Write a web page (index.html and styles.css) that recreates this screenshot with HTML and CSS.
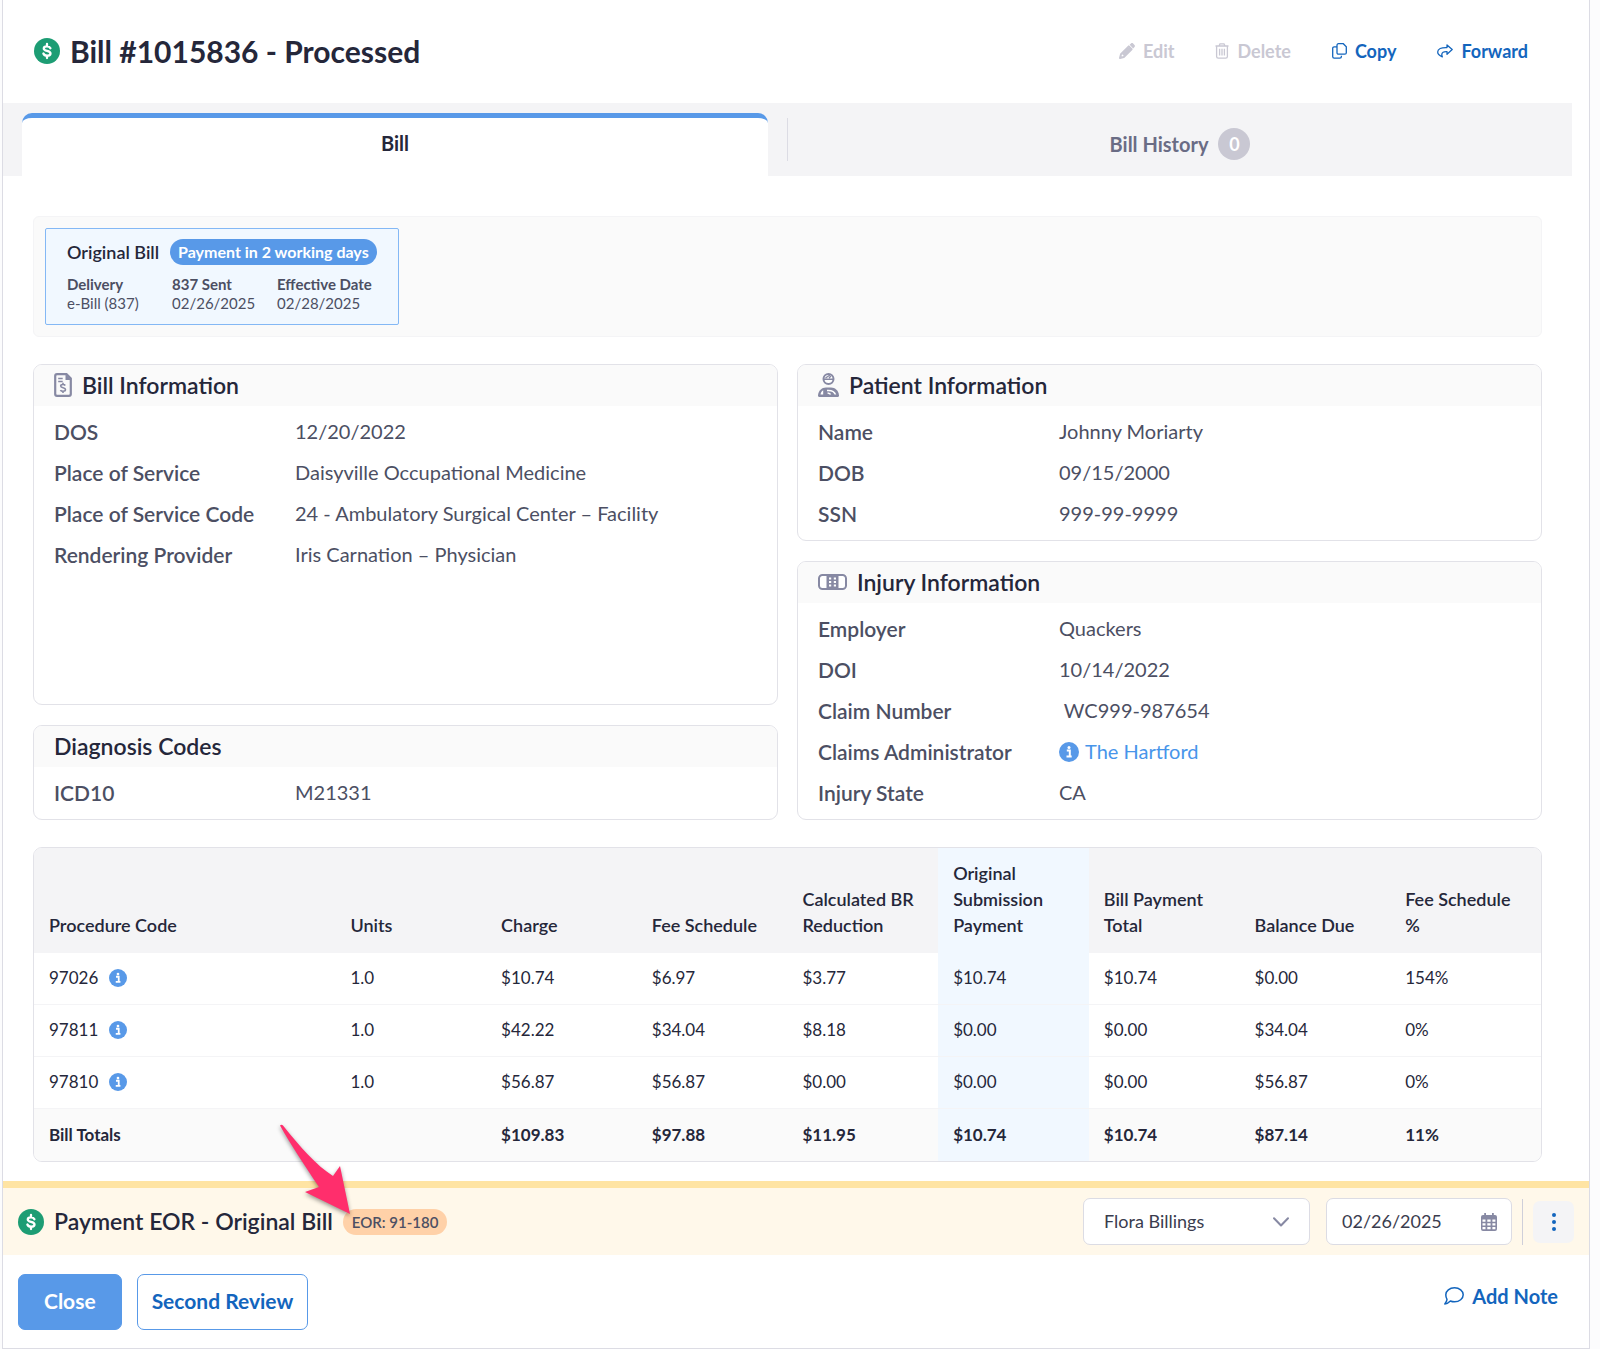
FILE: index.html
```html
<!DOCTYPE html>
<html lang="en">

<head>
    <meta charset="UTF-8">
    <meta name="viewport" content="width=device-width, initial-scale=1.0">
    <title>Bill #1015836</title>
    <link rel="stylesheet" href="styles.css">
</head>

<body>

    <!-- shared icons -->
    <svg class="sprite" aria-hidden="true">
        <symbol id="icon-dollar" viewBox="0 0 26 26">
            <circle cx="13" cy="13" r="13" fill="#1d9d74" />
            <path d="M16.400 10.200c-.5-1.200-1.700-1.800-3.400-1.800-1.900 0-3.200.8-3.200 2.100 0 3.200 6.700 1.500 6.700 4.900 0 1.400-1.400 2.300-3.400 2.300-1.800 0-3.200-.8-3.700-2.200M13 6v2.200M13 17.800v2.200" fill="none" stroke="#fff" stroke-width="2.300" stroke-linecap="round" />
        </symbol>
        <symbol id="icon-info" viewBox="0 0 20 20">
            <circle cx="10" cy="10" r="10" fill="#5899e8" />
            <circle cx="10" cy="5.600" r="1.500" fill="#fff" />
            <path d="M7.800 8.600h3v5M7.500 14.400h5.200" fill="none" stroke="#fff" stroke-width="2" />
        </symbol>
    </svg>

    <div class="panel">
        <header class="page-header">
            <svg class="icon-status"><use href="#icon-dollar" /></svg>
            <h1>Bill #1015836 - Processed</h1>
            <div class="actions">
                <button class="action" disabled>
                    <svg width="16" height="16" viewBox="0 0 16 16">
                        <path d="M10.600 1.800 12 .500c.6-.6 1.500-.6 2.100 0l1.400 1.400c.6.6.6 1.500 0 2.100l-1.300 1.400z" fill="currentColor" />
                        <path d="M9.800 3.400 2 11.200 1 15l3.800-1 7.800-7.800zM4 12l6.500-6.500" fill="none" stroke="currentColor" stroke-width="2" stroke-linejoin="round" />
                    </svg>
                    Edit
                </button>
                <button class="action" disabled>
                    <svg width="14" height="16" viewBox="0 0 14 16" fill="none" stroke="currentColor" stroke-width="1.300">
                        <path d="M.500 3h13M4 3l1-2.200h4L10 3M1.600 3v10.500c0 1 .7 1.700 1.700 1.700h7.400c1 0 1.700-.7 1.700-1.700V3M4.600 5.800v6.600M7 5.800v6.600M9.400 5.800v6.600" />
                    </svg>
                    Delete
                </button>
                <button class="action">
                    <svg width="15" height="16" viewBox="0 0 15 16" fill="none" stroke="currentColor" stroke-width="1.300">
                        <path d="M6.500.700h4.800l3 3v6c0 .900-.6 1.500-1.500 1.500H6.500C5.600 11.200 5 10.600 5 9.700V2.200C5 1.300 5.600.700 6.500.700zM5 3.800H2.200C1.300 3.800.700 4.400.700 5.300v8.200c0 .9.6 1.600 1.500 1.600h5.600c.9 0 1.600-.7 1.600-1.600v-.800" />
                    </svg>
                    Copy
                </button>
                <button class="action">
                    <svg width="16" height="14" viewBox="0 0 16 14" fill="none" stroke="currentColor" stroke-width="1.300" stroke-linejoin="round">
                        <path d="M10 1l5.200 4.600L10 10.200V7.600c-3.600-.2-5.200.9-5.200 2.900 0 .8.200 1.500.5 2.300C2.500 11.700.700 10.200.700 8c0-3.300 3.500-4.600 9.300-4.400z" />
                    </svg>
                    Forward
                </button>
            </div>
        </header>

        <nav class="tabs">
            <button class="tab active">Bill</button>
            <span class="tab-divider"></span>
            <button class="tab">Bill History <span class="count">0</span></button>
        </nav>

        <main class="content">
            <section class="submissions">
                <div class="submission">
                    <div class="submission-top">
                        <h2>Original Bill</h2>
                        <span class="pill">Payment in 2 working days</span>
                    </div>
                    <dl class="submission-info">
                        <div>
                            <dt>Delivery</dt>
                            <dd>e-Bill (837)</dd>
                        </div>
                        <div>
                            <dt>837 Sent</dt>
                            <dd>02/26/2025</dd>
                        </div>
                        <div>
                            <dt>Effective Date</dt>
                            <dd>02/28/2025</dd>
                        </div>
                    </dl>
                </div>
            </section>

            <div class="columns">
                <div class="column">
                    <section class="card grow">
                        <h2>
                            <svg width="18" height="24" viewBox="0 0 18 24">
                                <path d="M3 1.200h9.500l4.300 4.300V21c0 1-.8 1.800-1.800 1.800H3c-1 0-1.800-.8-1.800-1.800V3c0-1 .8-1.800 1.800-1.800z" fill="none" stroke="#8789a3" stroke-width="2.200" />
                                <path d="M11.500 1v6h6z" fill="#8789a3" />
                                <path d="M4.200 5.500h4.500M4.200 8.500h4.500M11.300 12.500c-.5-.7-1.300-1-2.300-1-1.400 0-2.300.6-2.300 1.600 0 2.300 4.800 1.100 4.800 3.500 0 1-1 1.700-2.500 1.700-1.200 0-2.100-.4-2.600-1.200M9 9.800v1.700M9 18.300V20" fill="none" stroke="#8789a3" stroke-width="1.600" />
                            </svg>
                            Bill Information
                        </h2>
                        <dl class="fields">
                            <dt>DOS</dt>
                            <dd>12/20/2022</dd>
                            <dt>Place of Service</dt>
                            <dd>Daisyville Occupational Medicine</dd>
                            <dt>Place of Service Code</dt>
                            <dd>24 - Ambulatory Surgical Center – Facility</dd>
                            <dt>Rendering Provider</dt>
                            <dd>Iris Carnation – Physician</dd>
                        </dl>
                    </section>

                    <section class="card">
                        <h2>Diagnosis Codes</h2>
                        <dl class="fields">
                            <dt>ICD10</dt>
                            <dd>M21331</dd>
                        </dl>
                    </section>
                </div>

                <div class="column">
                    <section class="card">
                        <h2>
                            <svg width="21" height="24" viewBox="0 0 21 24">
                                <circle cx="10.500" cy="6" r="5" fill="#fff" stroke="#8789a3" stroke-width="2" />
                                <path d="M6 6.200h9M7.500 5l4.500-3M11 5l2-2" fill="none" stroke="#8789a3" stroke-width="1.400" />
                                <path d="M0 22.500C.300 17.500 3.800 14.400 8 14.400h5c4.200 0 7.700 3.100 8 8.100 0 .9-.5 1.500-1.400 1.500H1.400C.500 24 0 23.400 0 22.500z" fill="#8789a3" />
                                <path d="M2.500 21.500c.2-2 1.200-3.500 2.700-4.300v4.300zM9 16.700c4.800-.4 8.200 1.200 9.300 4.800h-1.800c-.9-2.500-3.400-3.700-7.500-3.200zM9.500 19.500c2 0 3.200.6 3.700 2h-1.900c-.4-.6-.9-.8-1.800-.8z" fill="#fff" />
                            </svg>
                            Patient Information
                        </h2>
                        <dl class="fields">
                            <dt>Name</dt>
                            <dd>Johnny Moriarty</dd>
                            <dt>DOB</dt>
                            <dd>09/15/2000</dd>
                            <dt>SSN</dt>
                            <dd>999-99-9999</dd>
                        </dl>
                    </section>

                    <section class="card">
                        <h2>
                            <svg width="29" height="16" viewBox="0 0 29 16">
                                <rect x="1" y="1" width="27" height="14" rx="3.500" fill="#fff" stroke="#8789a3" stroke-width="2" />
                                <rect x="8.500" y="1" width="12" height="14" fill="#8789a3" />
                                <g fill="#fff">
                                    <rect x="11" y="3.500" width="2.200" height="2" />
                                    <rect x="15.800" y="3.500" width="2.200" height="2" />
                                    <rect x="11" y="7" width="2.200" height="2" />
                                    <rect x="15.800" y="7" width="2.200" height="2" />
                                    <rect x="11" y="10.500" width="2.200" height="2" />
                                    <rect x="15.800" y="10.500" width="2.200" height="2" />
                                </g>
                            </svg>
                            Injury Information
                        </h2>
                        <dl class="fields">
                            <dt>Employer</dt>
                            <dd>Quackers</dd>
                            <dt>DOI</dt>
                            <dd>10/14/2022</dd>
                            <dt>Claim Number</dt>
                            <dd>&nbsp;WC999-987654</dd>
                            <dt>Claims Administrator</dt>
                            <dd><a href="#" class="admin-link"><svg class="icon-info large"><use href="#icon-info" /></svg>The Hartford</a></dd>
                            <dt>Injury State</dt>
                            <dd>CA</dd>
                        </dl>
                    </section>
                </div>
            </div>

            <div class="table-wrap">
                <table>
                    <thead>
                        <tr>
                            <th class="code">Procedure Code</th>
                            <th>Units</th>
                            <th>Charge</th>
                            <th>Fee Schedule</th>
                            <th>Calculated BR Reduction</th>
                            <th class="highlight">Original Submission Payment</th>
                            <th>Bill Payment Total</th>
                            <th>Balance Due</th>
                            <th>Fee Schedule %</th>
                        </tr>
                    </thead>
                    <tbody>
                        <tr>
                            <td>97026 <svg class="icon-info"><use href="#icon-info" /></svg></td>
                            <td>1.0</td>
                            <td>$10.74</td>
                            <td>$6.97</td>
                            <td>$3.77</td>
                            <td class="highlight">$10.74</td>
                            <td>$10.74</td>
                            <td>$0.00</td>
                            <td>154%</td>
                        </tr>
                        <tr>
                            <td>97811 <svg class="icon-info"><use href="#icon-info" /></svg></td>
                            <td>1.0</td>
                            <td>$42.22</td>
                            <td>$34.04</td>
                            <td>$8.18</td>
                            <td class="highlight">$0.00</td>
                            <td>$0.00</td>
                            <td>$34.04</td>
                            <td>0%</td>
                        </tr>
                        <tr>
                            <td>97810 <svg class="icon-info"><use href="#icon-info" /></svg></td>
                            <td>1.0</td>
                            <td>$56.87</td>
                            <td>$56.87</td>
                            <td>$0.00</td>
                            <td class="highlight">$0.00</td>
                            <td>$0.00</td>
                            <td>$56.87</td>
                            <td>0%</td>
                        </tr>
                    </tbody>
                    <tfoot>
                        <tr>
                            <td>Bill Totals</td>
                            <td></td>
                            <td>$109.83</td>
                            <td>$97.88</td>
                            <td>$11.95</td>
                            <td class="highlight">$10.74</td>
                            <td>$10.74</td>
                            <td>$87.14</td>
                            <td>11%</td>
                        </tr>
                    </tfoot>
                </table>
            </div>
        </main>

        <section class="payment-bar">
            <svg class="icon-status"><use href="#icon-dollar" /></svg>
            <h2>Payment EOR - Original Bill</h2>
            <span class="eor">EOR: 91-180
                <svg class="pointer" width="74" height="94" viewBox="0 0 74 94">
                    <path d="M1 1.500Q2.500 0 4 1.500C22 24 37 41 54 52L61 42 71 90 26 68 40 63C26 42 12 21 1 1.500z" fill="#ff2e6c" />
                </svg>
            </span>
            <div class="bar-controls">
                <div class="select-box">
                    <select aria-label="Biller">
                        <option>Flora Billings</option>
                    </select>
                    <svg width="16" height="10" viewBox="0 0 16 10" fill="none" stroke="#8789a3" stroke-width="2" stroke-linecap="round" stroke-linejoin="round">
                        <path d="M1 1.200l7 7.300 7-7.300" />
                    </svg>
                </div>
                <div class="date-box">
                    <input type="text" aria-label="Payment date" value="02/26/2025">
                    <svg width="16" height="18" viewBox="0 0 16 18">
                        <path d="M2 2h12a2 2 0 0 1 2 2v12a2 2 0 0 1-2 2H2a2 2 0 0 1-2-2V4a2 2 0 0 1 2-2zM3.200 0h1.800v3H3.200zM11 0h1.800v3H11z" fill="#8789a3" />
                        <path d="M1.500 6.500h3v2.300h-3zM6.300 6.500h3.300v2.300H6.300zM11.400 6.500h3v2.300h-3zM1.500 10.300h3v2.300h-3zM6.300 10.300h3.300v2.300H6.300zM11.400 10.300h3v2.300h-3zM1.500 14h3v2.300h-3zM6.300 14h3.300v2.300H6.300zM11.400 14h3v2.300h-3z" fill="#fff" />
                    </svg>
                </div>
                <span class="bar-divider"></span>
                <button class="more" aria-label="More actions">
                    <svg width="4" height="18" viewBox="0 0 4 18" fill="#1365bd">
                        <circle cx="2" cy="2" r="2" />
                        <circle cx="2" cy="9" r="2" />
                        <circle cx="2" cy="16" r="2" />
                    </svg>
                </button>
            </div>
        </section>

        <footer class="page-footer">
            <button class="btn primary">Close</button>
            <button class="btn">Second Review</button>
            <button class="add-note">
                <svg width="20" height="18" viewBox="0 0 20 18" fill="none" stroke="currentColor" stroke-width="1.500" stroke-linejoin="round">
                    <path d="M10.500.800c4.900 0 8.700 3.100 8.700 7s-3.800 7-8.700 7c-1.500 0-2.900-.3-4.100-.8-1.500 1.500-3.300 2.900-5.600 3 1.200-1.300 2-2.900 2.200-4.600-.8-1.300-1.200-2.900-1.200-4.600 0-3.900 3.800-7 8.700-7z" />
                </svg>
                Add Note
            </button>
        </footer>
    </div>

</body>

</html>
```
FILE: styles.css
```css
* {
    margin: 0;
    padding: 0;
    box-sizing: border-box;
}

body {
    padding: 0 10px 0 2px;
    background: #fcfcfd;
    font-family: Lato, sans-serif;
    font-size: 20px;
    color: #25273a;
}

button,
input,
select {
    font-family: inherit;
    border: none;
    background: none;
}

button {
    cursor: pointer;
}

svg {
    flex: none;
}

.sprite {
    display: none;
}

.panel {
    min-height: 100vh;
    background: #fff;
    border: 1px solid #dcdce4;
    border-top: none;
}

/* header */
.page-header {
    display: flex;
    align-items: center;
    height: 103px;
    padding: 0 61px 2px 31px;
}

.icon-status {
    width: 26px;
    height: 26px;
}

.page-header h1 {
    margin-left: 10px;
    font-size: 30px;
    font-weight: 700;
}

.actions {
    display: flex;
    gap: 41px;
    margin-left: auto;
}

.action {
    display: flex;
    align-items: center;
    gap: 8px;
    font-size: 18px;
    font-weight: 700;
    color: #1365bd;
}

.action:disabled {
    color: #c9c8d3;
    cursor: default;
}

/* tabs */
.tabs {
    display: grid;
    grid-template-columns: 1fr 1px 1fr;
    margin-right: 17px;
    padding-top: 10px;
    background: #f4f4f6;
}

.tab {
    display: flex;
    align-items: center;
    justify-content: center;
    height: 63px;
    gap: 10px;
    padding-bottom: 2px;
    font-size: 20px;
    font-weight: 700;
    color: #6a6c85;
}

.tab.active {
    margin: 0 19px;
    padding-bottom: 8px;
    background: #fff;
    border-top: 5px solid #5899e8;
    border-radius: 10px 10px 0 0;
    color: #25273a;
}

.tab-divider {
    height: 43px;
    margin-top: 5px;
    background: #dcdce4;
}

.count {
    width: 32px;
    border-radius: 16px;
    background: #c9c8d3;
    color: #fff;
    font-size: 18px;
    font-weight: 700;
    line-height: 32px;
}

.content {
    padding: 40px 47px 19px 30px;
}

/* submissions strip */
.submissions {
    display: flex;
    padding: 11px;
    background: #fafafa;
    border: 1px solid #f4f4f6;
    border-radius: 6px;
}

.submission {
    padding: 10px 21px 11px;
    background: #f1f8ff;
    border: 1px solid #84b8f5;
    border-radius: 2px;
}

.submission-top {
    display: flex;
    align-items: center;
    gap: 11px;
}

.submission h2 {
    font-size: 18px;
    font-weight: 600;
}

.pill {
    padding: 0 8px;
    border-radius: 13px;
    background: #5899e8;
    color: #fff;
    font-size: 16px;
    font-weight: 700;
    line-height: 26px;
}

.submission-info {
    display: grid;
    grid-template-columns: 84px 84px auto;
    gap: 21px;
    margin-top: 10px;
    font-size: 15px;
    line-height: 19px;
    color: #4c4f63;
}

.submission-info dt {
    font-weight: 700;
}

/* info cards */
.columns {
    display: grid;
    grid-template-columns: 1fr 1fr;
    gap: 19px;
    margin: 27px 0;
}

.column {
    display: flex;
    flex-direction: column;
    gap: 20px;
}

.card {
    border: 1px solid #e2e2e8;
    border-radius: 9px;
    overflow: hidden;
}

.card.grow {
    flex: 1;
}

.card h2 {
    display: flex;
    align-items: center;
    gap: 10px;
    height: 41px;
    padding: 0 20px 2px;
    background: #fafafa;
    font-size: 23px;
    font-weight: 600;
}

.fields {
    display: grid;
    grid-template-columns: 241px 1fr;
    padding: 5px 20px 6px;
    line-height: 41px;
    color: #4c4f63;
}

.fields dt {
    font-size: 21px;
    font-weight: 600;
}

.admin-link {
    display: flex;
    align-items: center;
    gap: 6px;
    color: #4795ea;
    text-decoration: none;
}

/* procedures table */
.table-wrap {
    border: 1px solid #e2e2e8;
    border-radius: 9px;
    overflow: hidden;
}

table {
    width: 100%;
    table-layout: fixed;
    border-spacing: 0;
    font-size: 17px;
    line-height: 26px;
}

th,
td {
    padding: 12px 15px 13px;
    text-align: left;
}

th {
    background: #f4f4f6;
    padding-bottom: 15px;
    font-size: 18px;
    font-weight: 600;
    vertical-align: bottom;
}

th.code {
    width: 20%;
}

td {
    border-bottom: 1px solid #f4f4f6;
}

tfoot td {
    padding: 13px 15px;
    border-bottom: none;
    background: #fafafa;
    font-weight: 700;
}

th.highlight,
td.highlight {
    background: #f1f8ff;
}

.icon-info {
    width: 18px;
    height: 18px;
    margin-left: 6px;
    vertical-align: -3px;
}

.icon-info.large {
    width: 20px;
    height: 20px;
    margin-left: 0;
}

/* payment bar */
.payment-bar {
    display: flex;
    align-items: center;
    height: 74px;
    padding: 0 15px;
    border-top: 7px solid #ffe4a3;
    background: #fff8ea;
}

.payment-bar h2 {
    margin: 0 10px;
    padding-bottom: 2px;
    font-size: 23px;
    font-weight: 600;
}

.eor {
    position: relative;
    padding: 0 9px;
    border-radius: 13px;
    background: #ffd1a8;
    color: #4c4f63;
    font-size: 15px;
    font-weight: 600;
    line-height: 26px;
}

/* arrow pointing at the EOR label */
.pointer {
    position: absolute;
    left: -64px;
    top: -85px;
    filter: drop-shadow(0 2px 2px rgba(0, 0, 0, 0.4));
}

.bar-controls {
    display: flex;
    align-items: center;
    margin-left: auto;
}

.select-box,
.date-box {
    position: relative;
    margin-right: 16px;
}

.date-box {
    margin-right: 10px;
}

.select-box svg,
.date-box svg {
    position: absolute;
    top: 50%;
    right: 21px;
    transform: translateY(-50%);
    pointer-events: none;
}

.date-box svg {
    right: 15px;
}

.select-box select,
.date-box input {
    width: 227px;
    height: 47px;
    padding: 0 20px 2px;
    appearance: none;
    background: #fff;
    border: 1px solid #dcdce4;
    border-radius: 7px;
    color: #3a3c4e;
    font-size: 18px;
}

.date-box input {
    width: 186px;
    padding: 0 15px 2px;
}

.bar-divider {
    width: 1px;
    height: 46px;
    margin-right: 10px;
    background: #cfcfd9;
}

.more {
    display: flex;
    align-items: center;
    justify-content: center;
    width: 41px;
    height: 42px;
    border-radius: 7px;
    background: #f4f4f6;
}

/* footer */
.page-footer {
    display: flex;
    gap: 15px;
    padding: 19px 31px 18px 15px;
}

.btn {
    height: 56px;
    padding: 0 14px 3px;
    border: 1px solid #5899e8;
    border-radius: 7px;
    color: #1365bd;
    font-size: 21px;
    font-weight: 700;
}

.btn.primary {
    padding: 0 25px 3px;
    background: #5899e8;
    color: #fff;
}

.add-note {
    display: flex;
    align-items: center;
    gap: 8px;
    height: 43px;
    margin-left: auto;
    color: #1365bd;
    font-size: 20px;
    font-weight: 700;
}
```
